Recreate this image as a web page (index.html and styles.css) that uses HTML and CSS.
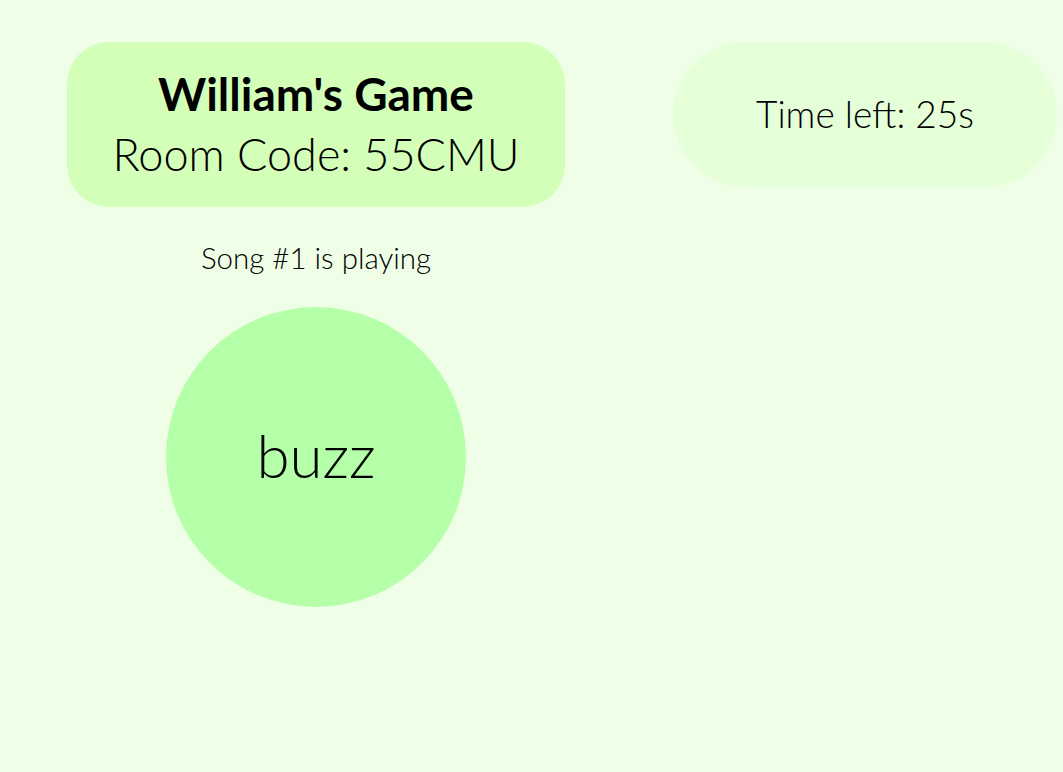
FILE: index.html
```html
<!DOCTYPE html>
<html>
<head>
<meta charset="utf-8">
<link rel="stylesheet" href="styles.css">
</head>
<body>
<div class="page">
  <div class="left">
    <div class="header-card">
      <div class="title">William's Game</div>
      <div class="room">Room Code: 55CMU</div>
    </div>
    <div class="status">Song #1 is playing</div>
    <button class="buzz">buzz</button>
  </div>
  <div class="timer">Time left: 25s</div>
</div>
</body>
</html>
```
FILE: styles.css
```css
html, body {
  margin: 0;
  padding: 0;
  background: #effee6;
  font-family: "Lato", "Open Sans", sans-serif;
  color: #000;
}
.page {
  display: flex;
  align-items: flex-start;
  gap: 108px;
  padding: 42px 0 0 67px;
}
.left {
  width: 498px;
  display: flex;
  flex-direction: column;
  align-items: center;
}
.header-card {
  width: 100%;
  height: 165px;
  box-sizing: border-box;
  background: #d3ffb8;
  border-radius: 42px;
  display: flex;
  flex-direction: column;
  align-items: center;
  justify-content: center;
  padding-bottom: 2px;
}
.title {
  font-weight: 700;
  font-size: 46px;
  line-height: 54px;
}
.room {
  margin-top: 6px;
  font-weight: 300;
  font-size: 45px;
  line-height: 54px;
}
.status {
  margin-top: 32px;
  font-weight: 300;
  font-size: 29.5px;
  line-height: 38px;
}
.buzz {
  margin-top: 30px;
  width: 300px;
  height: 300px;
  border: none;
  border-radius: 50%;
  background: #b5ffa8;
  font-family: inherit;
  font-weight: 300;
  font-size: 60px;
  color: #000;
  padding: 0;
  padding-bottom: 4px;
}
.timer {
  width: 384px;
  height: 145px;
  border-radius: 73px;
  background: #e5ffd8;
  display: flex;
  align-items: center;
  justify-content: center;
  font-weight: 300;
  font-size: 37px;
  padding-bottom: 3px;
  box-sizing: border-box;
}
```
